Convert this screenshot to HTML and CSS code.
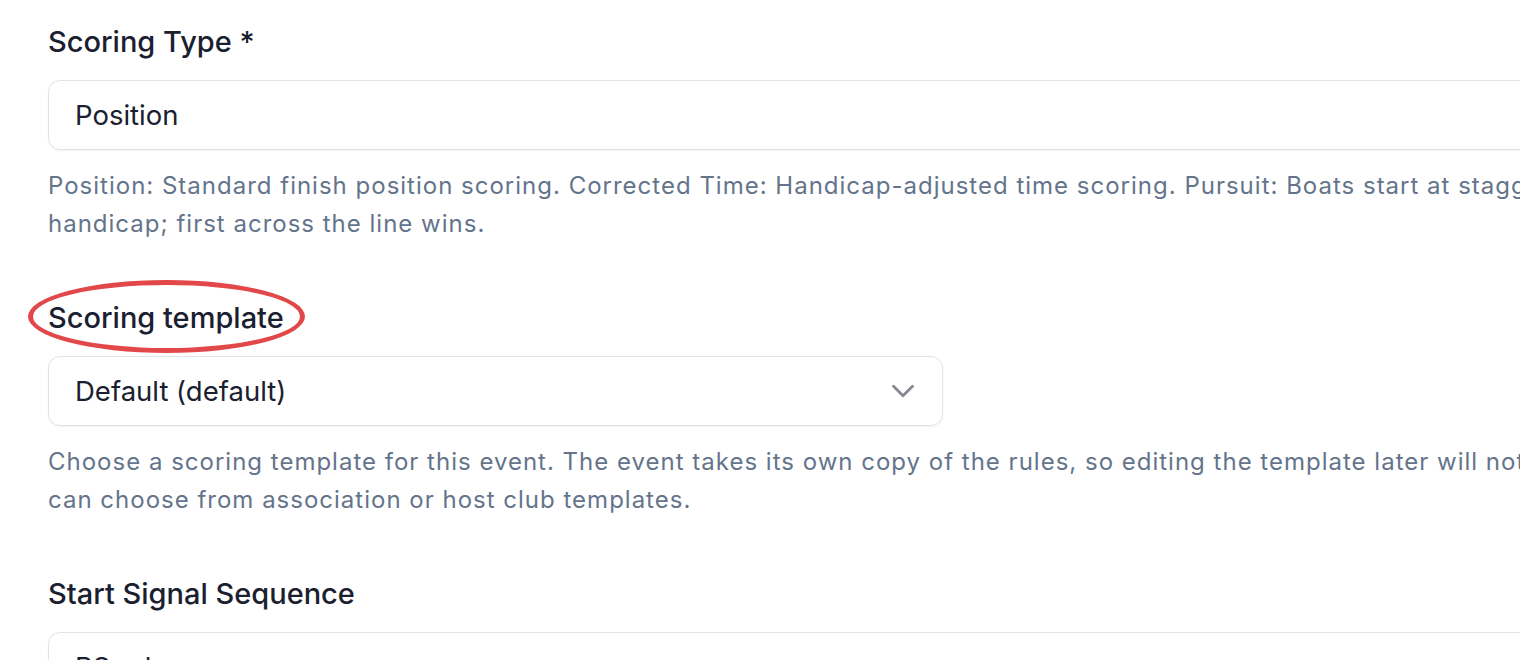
FILE: index.html
```html
<!DOCTYPE html>
<html lang="en">
<head>
    <meta charset="UTF-8">
    <meta name="viewport" content="width=device-width, initial-scale=1.0">
    <title>Event Scoring</title>
    <link rel="stylesheet" href="styles.css">
</head>
<body>
    <form class="event-form">
        <div class="field">
            <label class="label" for="scoringType">Scoring Type *</label>
            <div class="input">Position</div>
            <p class="help">Position: Standard finish position scoring. Corrected Time: Handicap-adjusted time scoring. Pursuit: Boats start at staggered times based on handicap; first across the line wins.</p>
        </div>

        <div class="field">
            <div class="label-wrap">
                <label class="label" for="scoringTemplate">Scoring template</label>
                <span class="highlight"></span>
            </div>
            <div class="select">
                <span>Default (default)</span>
                <svg class="chevron" viewBox="0 0 24 24" fill="none" stroke="currentColor" stroke-width="1.8" stroke-linecap="round" stroke-linejoin="round"><path d="m6 9 6 6 6-6"/></svg>
            </div>
            <p class="help">Choose a scoring template for this event. The event takes its own copy of the rules, so editing the template later will not affect this event. You can choose from association or host club templates.</p>
        </div>

        <div class="field">
            <label class="label" for="startSignal">Start Signal Sequence</label>
            <div class="input">RS rules</div>
        </div>
    </form>
</body>
</html>
```

FILE: styles.css
```css
body {
    margin: 0;
    background-color: #fff;
    font-family: Inter, "Noto Sans", sans-serif;
    color: #1a2030;
    overflow: hidden;
}

.event-form {
    width: 1770px;
    padding: 22px 48px 0;
    display: flex;
    flex-direction: column;
    gap: 55px;
}

.field {
    display: flex;
    flex-direction: column;
}

.label-wrap {
    position: relative;
    align-self: flex-start;
}

.label {
    display: block;
    font-size: 29px;
    font-weight: 500;
    line-height: 40px;
    margin-bottom: 18px;
}

/* red ring drawn round the template label */
.highlight {
    position: absolute;
    left: -20px;
    top: -18px;
    width: 267px;
    height: 63px;
    border: 5px solid #e2474a;
    border-radius: 50%;
}

.input,
.select {
    height: 68px;
    border: 1px solid #dfe2e6;
    border-radius: 12px;
    padding: 0 26px;
    font-size: 27.5px;
    display: flex;
    align-items: center;
    box-shadow: 0 1px 2px rgba(0, 0, 0, 0.05);
}

.select {
    width: 841px;
    justify-content: space-between;
}

.chevron {
    color: #868b93;
    width: 38px;
    height: 38px;
    margin-right: -6px;
}

.help {
    margin: 17px 0 0;
    font-size: 24px;
    line-height: 38px;
    letter-spacing: 1px;
    color: #64748b;
}
```
